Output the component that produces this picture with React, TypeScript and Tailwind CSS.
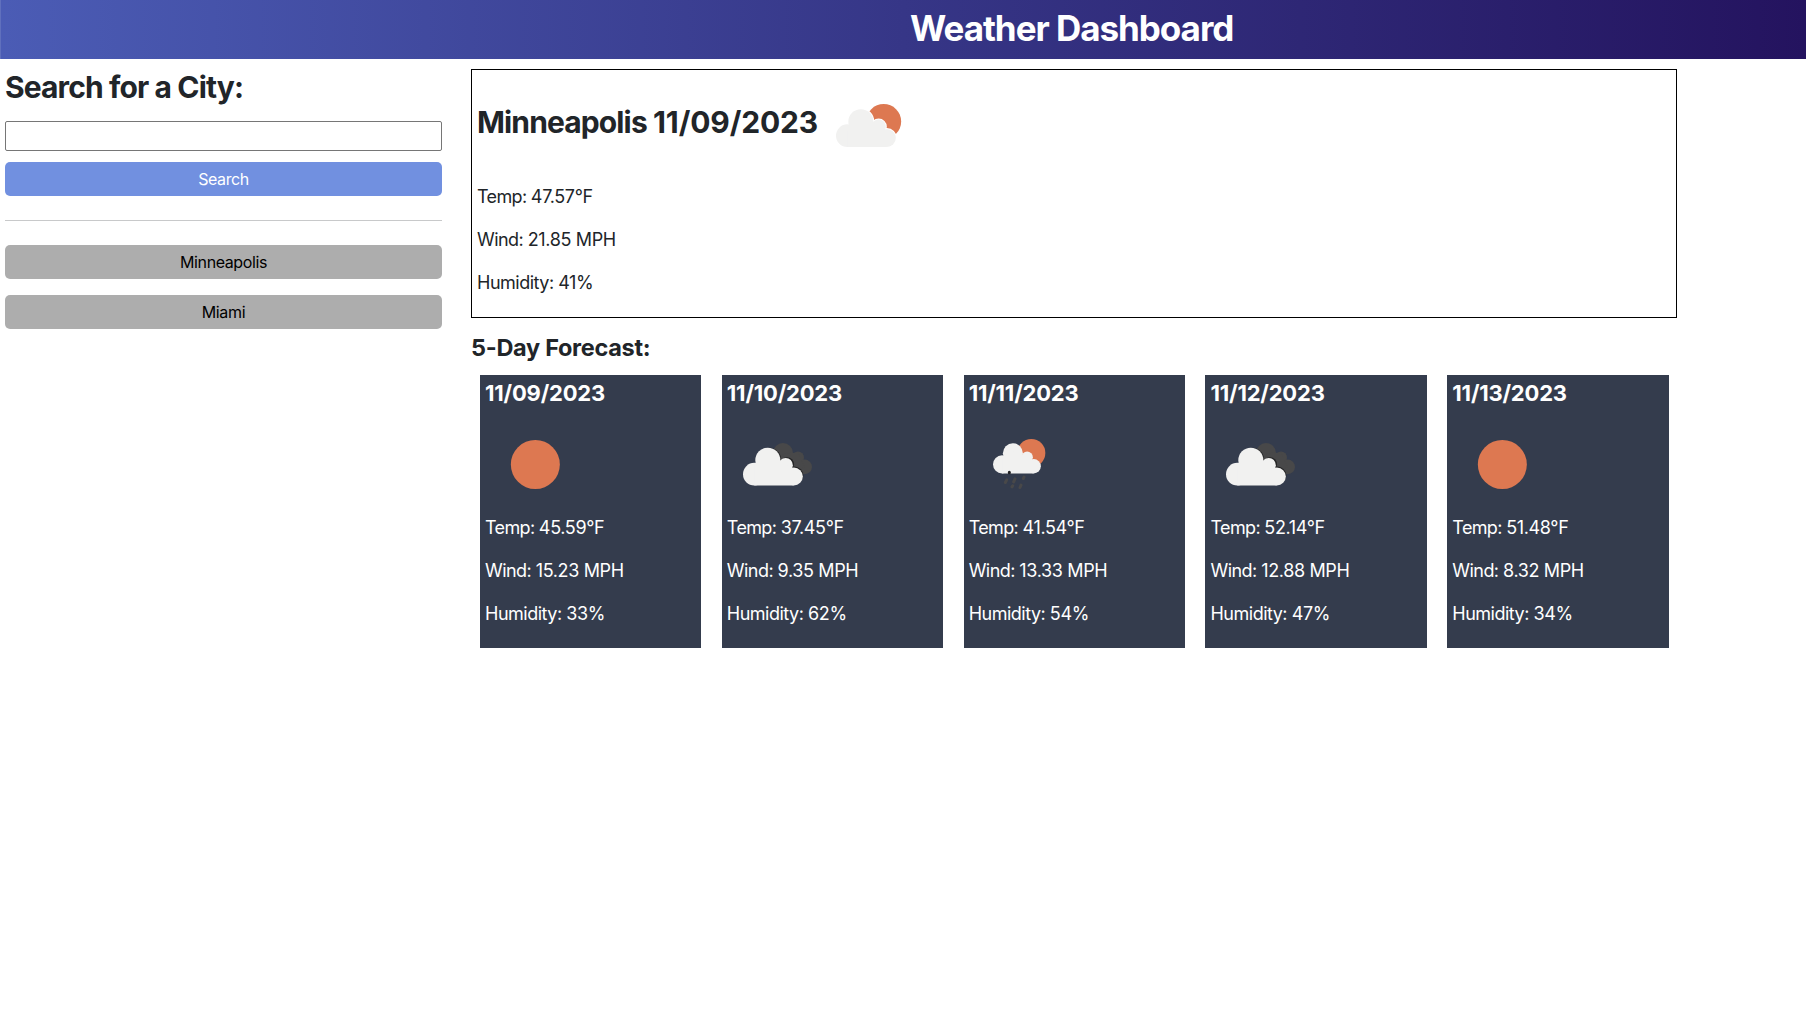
import React from "react";

type Kind = "sun" | "partly" | "broken" | "rain";

function Cloud() {
  return (
    <>
      <circle cx="82" cy="179" r="34" />
      <circle cx="122.500" cy="137" r="37.500" />
      <circle cx="176" cy="152" r="21.500" />
      <circle cx="200.500" cy="186" r="27" />
      <path d="M82 213V150L122 130L176 150L200 165V213Z" />
    </>
  );
}

function WeatherIcon({ kind }: { kind: Kind }) {
  return (
    <svg viewBox="0 0 300 300" className="block size-[100px] shrink-0">
      {kind === "sun" && <circle cx="151" cy="148.500" r="73.500" fill="#dd7851" />}
      {kind === "partly" && (
        <>
          <circle cx="191" cy="136.500" r="52.500" fill="#dd7851" />
          <g fill="#fff" stroke="#fff" strokeWidth="6">
            <Cloud />
          </g>
          <g fill="#f1f1f0">
            <Cloud />
          </g>
        </>
      )}
      {kind === "broken" && (
        <g transform="translate(0 -1.500)">
          <g fill="#484849">
            <circle cx="168" cy="115.500" r="30" />
            <circle cx="213" cy="129" r="18" />
            <circle cx="233" cy="157" r="22" />
            <path d="M167 116L213 115L233 157L190 179Z" />
          </g>
          <g fill="#242425" transform="translate(4 -3)">
            <circle cx="122.500" cy="139" r="36" />
            <circle cx="176" cy="152" r="21" />
            <circle cx="198" cy="186" r="27" />
          </g>
          <g fill="#f1f1f0">
            <Cloud />
          </g>
        </g>
      )}
      {kind === "rain" && (
        <g transform="translate(0 -1.500)">
          <circle cx="187" cy="115.500" r="42" fill="#dd7851" />
          <g fill="#f1f1f0" transform="translate(33.600 6.500) scale(.8)">
            <Cloud />
          </g>
          <g stroke="#484849" strokeWidth="9" strokeLinecap="round">
            <path d="M113 196l-4 8M138 193l-4 9M165 188l-2 4M131 214l-2 3M156 212l-3 7" />
            <path d="M121 173v2" stroke="#222224" />
          </g>
        </g>
      )}
    </svg>
  );
}

const days: { date: string; kind: Kind; temp: string; wind: string; hum: string }[] = [
  { date: "11/09/2023", kind: "sun", temp: "45.59", wind: "15.23", hum: "33" },
  { date: "11/10/2023", kind: "broken", temp: "37.45", wind: "9.35", hum: "62" },
  { date: "11/11/2023", kind: "rain", temp: "41.54", wind: "13.33", hum: "54" },
  { date: "11/12/2023", kind: "broken", temp: "52.14", wind: "12.88", hum: "47" },
  { date: "11/13/2023", kind: "sun", temp: "51.48", wind: "8.32", hum: "34" },
];

function Readings({ temp, wind, hum }: { temp: string; wind: string; hum: string }) {
  return (
    <div className="flex flex-col gap-4 text-[18px] leading-[27px] tracking-[-0.36px]">
      <p>
        <span className="tracking-[-0.65px]">Temp: </span>
        {temp}°F
      </p>
      <p>
        <span className="tracking-[-0.55px]">Wind: </span>
        {wind} MPH
      </p>
      <p>
        <span className="tracking-[-0.5px]">Humidity: </span>
        {hum}%
      </p>
    </div>
  );
}

export default function App() {
  return (
    <div className="min-h-screen bg-white font-['Inter',sans-serif] text-[#212529]">
      <header className="flex h-[59px] border-l border-[#6070bd] bg-linear-to-r from-[#4b5cb5] via-[#363687] to-[#24135f] pl-[909px]">
        <h1 className="whitespace-nowrap pt-[7px] text-[35px] font-bold leading-[43px] tracking-[-1.030px] text-white">
          Weather Dashboard
        </h1>
      </header>
      <div className="flex">
        <aside className="flex w-[447px] shrink-0 flex-col pl-[5px] pr-[5px] pt-[10px]">
          <h2 className="text-[30px] font-bold leading-[36px] tracking-[-0.870px]">Search for a City:</h2>
          <input className="mt-4 h-[30px] rounded-[2px] border border-[#767676] bg-white px-1" />
          <button className="mt-[11px] h-[34px] rounded-[5px] bg-[#7190e0] text-[16px] tracking-[-0.400px] text-white">
            Search
          </button>
          <hr className="mt-6 border-[#c8c9ca]" />
          <button className="mt-6 h-[34px] rounded-[5px] bg-[#adadad] text-[16px] tracking-[-0.400px] text-black">
            Minneapolis
          </button>
          <button className="mt-4 h-[34px] rounded-[5px] bg-[#adadad] text-[16px] tracking-[-0.3px] text-black">
            Miami
          </button>
        </aside>
        <main className="ml-6 w-[1207px] pt-[10px]">
          <section className="mr-px h-[249px] border border-black px-[5px] pt-[6px]">
            <div className="flex h-[100px]">
              <h2 className="w-[343px] whitespace-nowrap pt-[28px] text-[30px] font-bold leading-[36px] tracking-[-0.130px]">
                <span className="tracking-[-0.870px]">Minneapolis </span>11/09/2023
              </h2>
              <WeatherIcon kind="partly" />
            </div>
            <div className="mt-[7px]">
              <Readings temp="47.57" wind="21.85" hum="41" />
            </div>
          </section>
          <h3 className="mt-[15px] text-[23.500px] font-bold leading-[29px] tracking-[-0.3px]">5-Day Forecast:</h3>
          <div className="mt-[13px] flex gap-[20.450px] pl-[9px]">
            {days.map((d) => (
              <article key={d.date} className="h-[273px] w-[221.400px] bg-[#343c4d] px-[5px] pt-[5px] text-white">
                <h4 className="text-[22px] font-bold leading-[27px] tracking-[-0.200px]">{d.date}</h4>
                <div className="mt-2">
                  <WeatherIcon kind={d.kind} />
                </div>
                <div className="-mt-px">
                  <Readings temp={d.temp} wind={d.wind} hum={d.hum} />
                </div>
              </article>
            ))}
          </div>
        </main>
      </div>
    </div>
  );
}
